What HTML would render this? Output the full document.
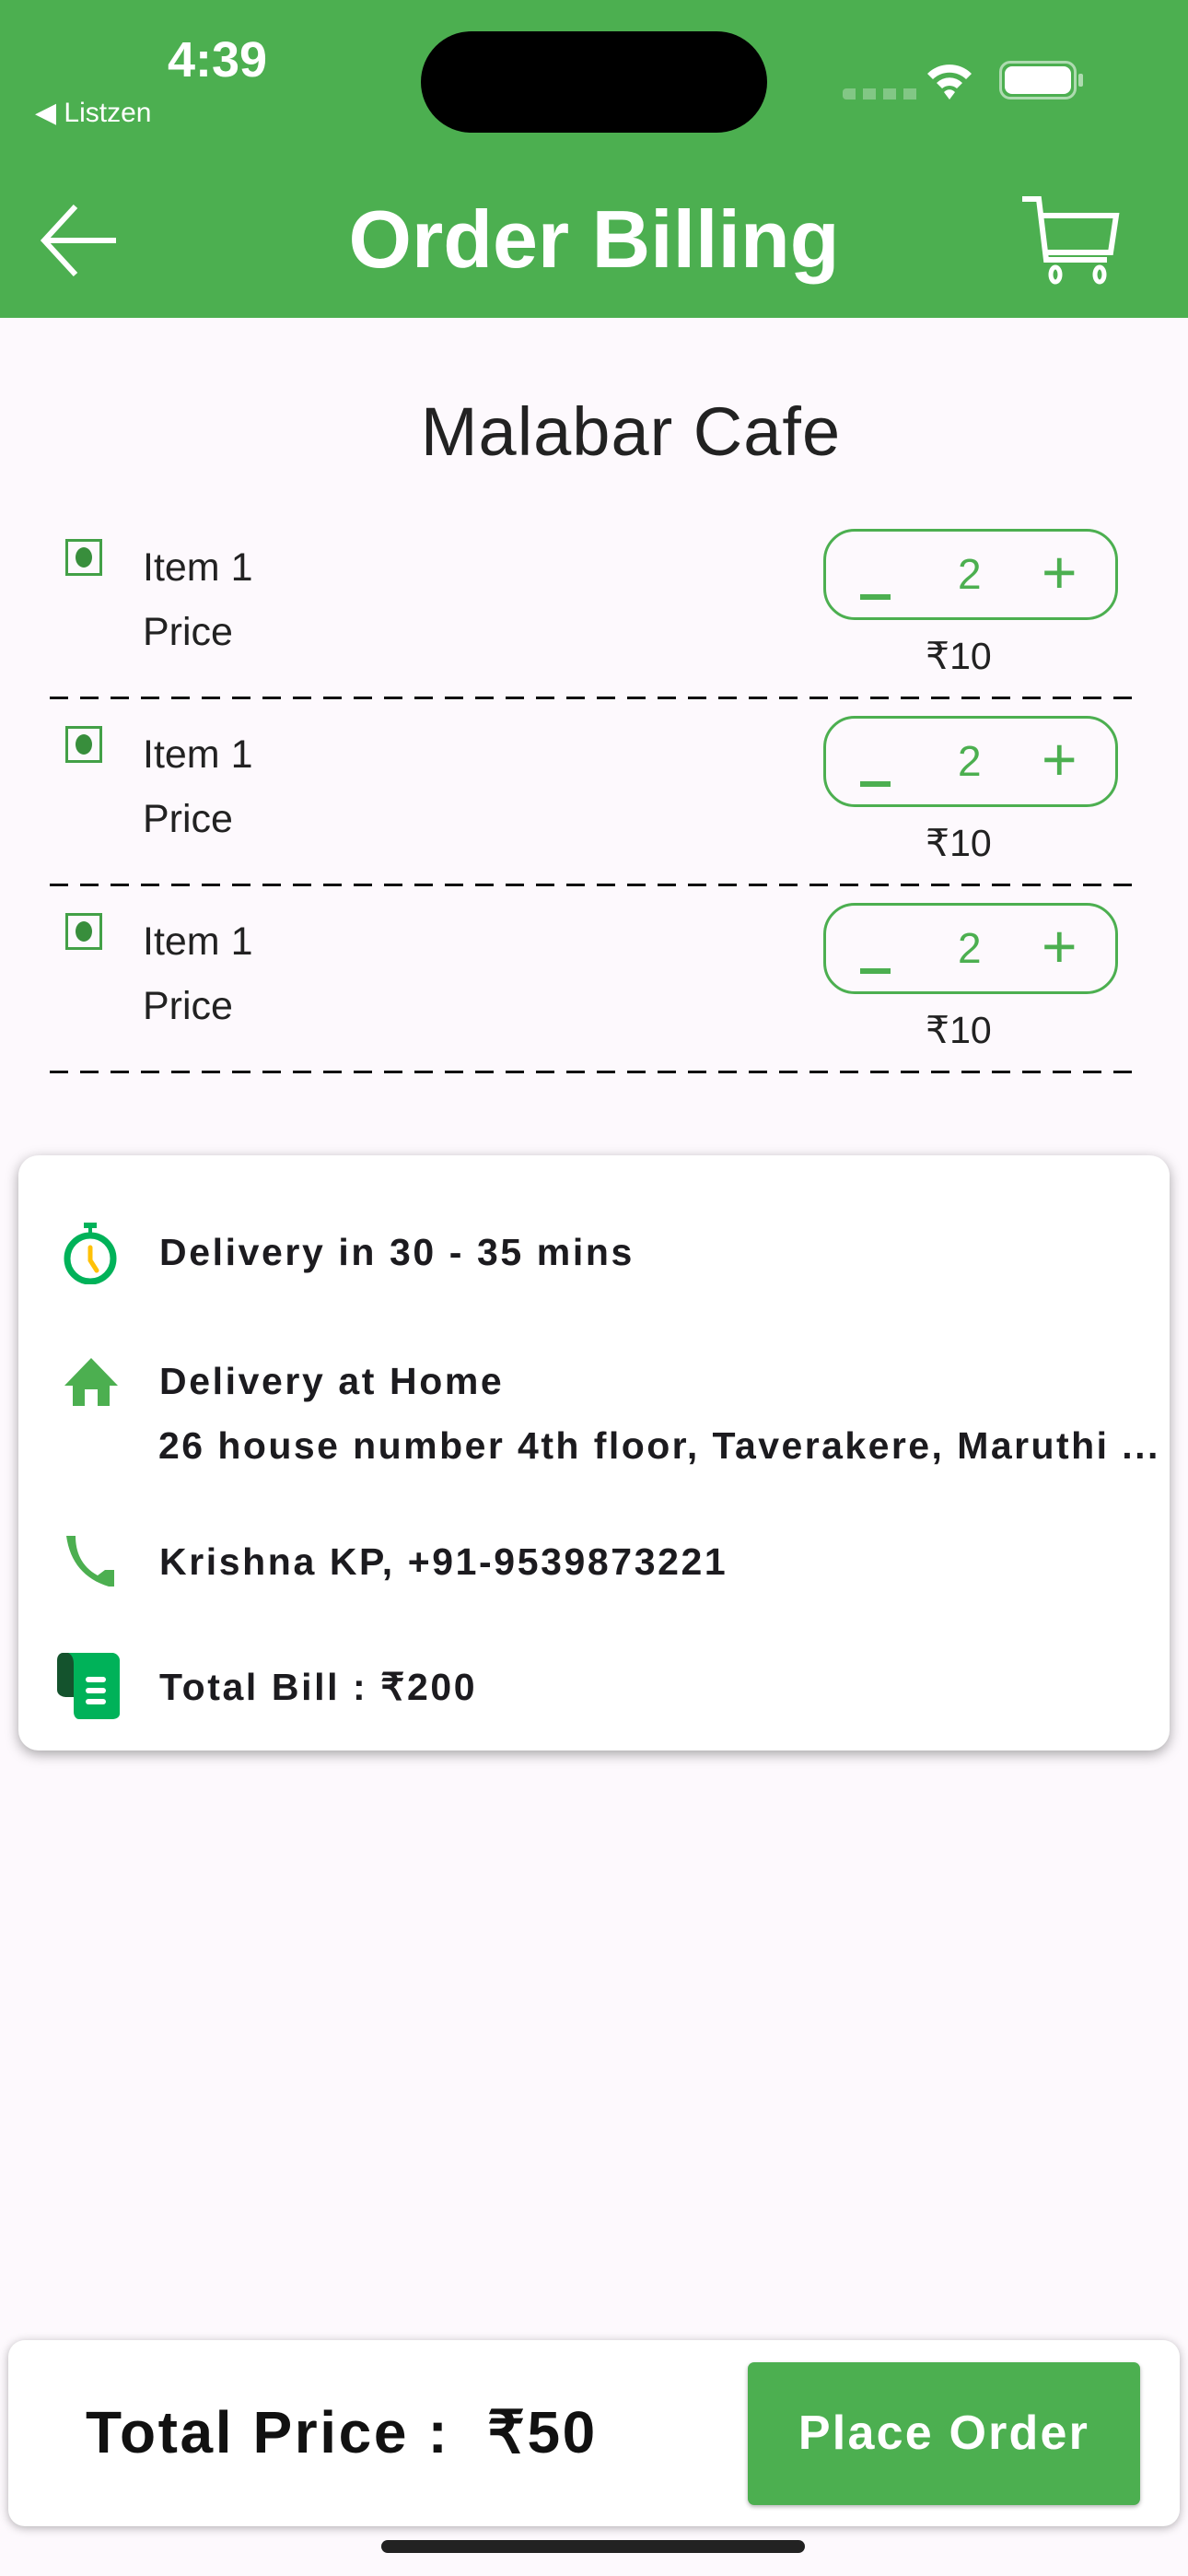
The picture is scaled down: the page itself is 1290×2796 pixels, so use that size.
<!DOCTYPE html>
<html><head><meta charset="utf-8"><style>
*{margin:0;padding:0;box-sizing:border-box}
body{width:1290px;height:2796px;background:#fdf9fd;font-family:"Liberation Sans",sans-serif;position:relative;overflow:hidden;color:#1c1b1f}
.abs{position:absolute}
.hdr{left:0;top:0;width:1290px;height:345px;background:#4caf50}
.t{white-space:nowrap;line-height:1}
.dash{left:54px;width:1186px;height:3px;background:repeating-linear-gradient(90deg,#111 0 20px,transparent 20px 33px)}
.cb{width:40px;height:40px;border:3px solid #43a047;}
.cb::after{content:"";position:absolute;left:8px;top:6px;width:18px;height:22px;border-radius:50%;background:#388e3c}
.step{width:320px;height:99px;border:3px solid #4caf50;border-radius:34px}
.g{color:#4caf50}
.b{font-weight:bold;font-size:41px;letter-spacing:2.6px;color:#1c1b1f}
.it{font-size:43px;color:#222}
</style></head><body>
<div class="abs hdr"></div>
<div class="abs t" style="left:182px;top:38px;font-size:54px;font-weight:bold;color:#fff">4:39</div>
<div class="abs t" style="left:38px;top:108px;font-size:30px;color:#fff">◀ Listzen</div>
<div class="abs" style="left:457px;top:34px;width:376px;height:110px;background:#000;border-radius:55px"></div>
<div class="abs" style="left:915px;top:96px;width:86px;height:12px;background:repeating-linear-gradient(90deg,rgba(255,255,255,.3) 0 14px,transparent 14px 22px);border-radius:4px"></div>
<svg class="abs" style="left:1003px;top:64px" width="56" height="44" viewBox="0 0 56 44"><path d="M4 16 A34 34 0 0 1 52 16 L46 22 A26 26 0 0 0 10 22Z M14 26 A20 20 0 0 1 42 26 L36 32 A12 12 0 0 0 20 32Z M28 44 L22 36 A8 8 0 0 1 34 36Z" fill="#fff"/></svg>
<div class="abs" style="left:1085px;top:66px;width:84px;height:42px;border:3px solid rgba(255,255,255,.55);border-radius:12px"></div>
<div class="abs" style="left:1091px;top:72px;width:72px;height:30px;background:#fff;border-radius:8px"></div>
<div class="abs" style="left:1171px;top:80px;width:5px;height:14px;background:rgba(255,255,255,.55);border-radius:2px"></div>
<svg class="abs" style="left:42px;top:220px" width="86" height="82" viewBox="0 0 86 82"><path d="M40 4 L6 41 L40 78 M6 41 L84 41" stroke="#fff" stroke-width="6" fill="none"/></svg>
<div class="abs t" style="left:0;width:1290px;text-align:center;top:216px;font-size:88px;font-weight:bold;color:#fff">Order Billing</div>
<svg class="abs" style="left:1108px;top:212px" width="108" height="98" viewBox="0 0 108 98"><path d="M2 4 H20 L28 70 H94 M24 22 H104 L98 62 H28" stroke="#fff" stroke-width="6" fill="none"/><ellipse cx="38" cy="86" rx="5" ry="8" fill="none" stroke="#fff" stroke-width="5"/><ellipse cx="86" cy="86" rx="5" ry="8" fill="none" stroke="#fff" stroke-width="5"/></svg>
<div class="abs t" style="left:0;width:1370px;text-align:center;top:432px;font-size:74px;color:#222;letter-spacing:1px">Malabar Cafe</div>

<div class="abs cb" style="left:71px;top:585px"></div>
<div class="abs t it" style="left:155px;top:595px">Item 1</div>
<div class="abs t it" style="left:155px;top:665px">Price</div>
<div class="abs step" style="left:894px;top:574px"></div>
<div class="abs" style="left:934px;top:645px;width:33px;height:6px;background:#4caf50"></div>
<div class="abs t g" style="left:1040px;top:600px;font-size:46px">2</div>
<div class="abs t g" style="left:1131px;top:588px;font-size:66px">+</div>
<div class="abs t" style="left:1005px;top:692px;font-size:41px;color:#222">₹10</div>
<div class="abs dash" style="top:756px"></div>

<div class="abs cb" style="left:71px;top:788px"></div>
<div class="abs t it" style="left:155px;top:798px">Item 1</div>
<div class="abs t it" style="left:155px;top:868px">Price</div>
<div class="abs step" style="left:894px;top:777px"></div>
<div class="abs" style="left:934px;top:848px;width:33px;height:6px;background:#4caf50"></div>
<div class="abs t g" style="left:1040px;top:803px;font-size:46px">2</div>
<div class="abs t g" style="left:1131px;top:791px;font-size:66px">+</div>
<div class="abs t" style="left:1005px;top:895px;font-size:41px;color:#222">₹10</div>
<div class="abs dash" style="top:959px"></div>

<div class="abs cb" style="left:71px;top:991px"></div>
<div class="abs t it" style="left:155px;top:1001px">Item 1</div>
<div class="abs t it" style="left:155px;top:1071px">Price</div>
<div class="abs step" style="left:894px;top:980px"></div>
<div class="abs" style="left:934px;top:1051px;width:33px;height:6px;background:#4caf50"></div>
<div class="abs t g" style="left:1040px;top:1006px;font-size:46px">2</div>
<div class="abs t g" style="left:1131px;top:994px;font-size:66px">+</div>
<div class="abs t" style="left:1005px;top:1098px;font-size:41px;color:#222">₹10</div>
<div class="abs dash" style="top:1162px"></div>

<div class="abs" style="left:20px;top:1254px;width:1250px;height:646px;background:#fff;border-radius:22px;box-shadow:0 4px 14px rgba(0,0,0,.35)"></div>
<svg class="abs" style="left:62px;top:1324px" width="70" height="70" viewBox="0 0 70 70"><rect x="29" y="3" width="14" height="6" fill="#00b259"/><rect x="34" y="7" width="4" height="8" fill="#00b259"/><ellipse cx="36" cy="42" rx="25" ry="25" fill="none" stroke="#00b259" stroke-width="7"/><path d="M36 30 V44 L43 55" stroke="#ffc107" stroke-width="5" fill="none" stroke-linecap="round"/></svg>
<div class="abs t b" style="left:173px;top:1339px">Delivery in 30 - 35 mins</div>
<svg class="abs" style="left:68px;top:1472px" width="62" height="54" viewBox="0 0 62 54"><path d="M31 2 L60 32 H51 V54 H38 V36 H24 V54 H11 V32 H2Z" fill="#4caf50"/></svg>
<div class="abs t b" style="left:173px;top:1479px">Delivery at Home</div>
<div class="abs t b" style="left:172px;top:1549px;letter-spacing:2.45px">26 house number 4th floor, Taverakere, Maruthi ...</div>
<svg class="abs" style="left:66px;top:1664px" width="62" height="60" viewBox="0 0 62 60"><path d="M6 3 H16 C16 20 22 36 40 46 L48 40 H58 V58 H52 C26 50 10 32 6 3Z" fill="#4caf50"/></svg>
<div class="abs t b" style="left:173px;top:1675px">Krishna KP, +91-9539873221</div>
<svg class="abs" style="left:60px;top:1792px" width="74" height="74" viewBox="0 0 74 74"><path d="M8 2 H22 V50 H12 C8 50 2 48 2 42 V10 C2 4 6 2 8 2Z" fill="#14532d"/><path d="M14 2 H62 C66 2 70 6 70 10 V68 C70 72 66 74 62 74 H26 C22 74 20 70 20 66 V14 C20 8 18 4 14 2Z" fill="#00b259"/><rect x="33" y="28" width="22" height="6" rx="3" fill="#fff"/><rect x="33" y="40" width="22" height="6" rx="3" fill="#fff"/><rect x="33" y="52" width="22" height="6" rx="3" fill="#fff"/></svg>
<div class="abs t b" style="left:173px;top:1811px">Total Bill : ₹200</div>

<div class="abs" style="left:9px;top:2540px;width:1272px;height:202px;background:#fff;border-radius:18px;box-shadow:0 2px 10px rgba(0,0,0,.3)"></div>
<div class="abs t" style="left:93px;top:2608px;font-size:64px;font-weight:bold;color:#111;letter-spacing:2.6px">Total Price :&nbsp; ₹50</div>
<div class="abs" style="left:812px;top:2564px;width:426px;height:155px;background:#4caf50;border-radius:7px;box-shadow:0 2px 5px rgba(0,0,0,.3)"></div>
<div class="abs t" style="left:812px;top:2615px;width:426px;text-align:center;font-size:52px;font-weight:bold;color:#fff;letter-spacing:2.2px">Place Order</div>
<div class="abs" style="left:414px;top:2757px;width:460px;height:14px;background:#222;border-radius:7px"></div>
</body></html>
